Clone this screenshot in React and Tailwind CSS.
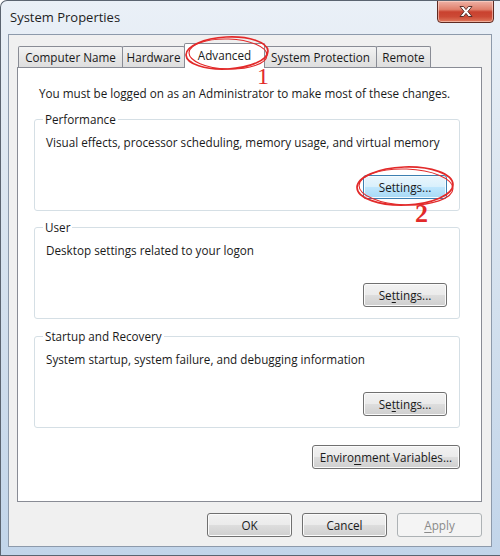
import React from "react";

function Btn({ children, variant = "normal", className = "" }) {
  const base =
    "h-[24px] flex items-center justify-center rounded-[3px] border text-[11.7px] leading-[16px] shrink-0";
  const styles = {
    normal:
      "border-[#707070] bg-[linear-gradient(#f2f2f2,#ebebeb_48%,#dddddd_52%,#cfcfcf)] shadow-[inset_0_0_0_1px_#fbfbfb] text-[#1a1a1a]",
    hover:
      "border-[#3c7fb1] bg-[linear-gradient(#eaf6fd,#d9f0fc_48%,#bee6fd_52%,#a7d9f5)] shadow-[inset_0_0_0_1px_#f4fbfe] text-[#1a1a1a]",
    disabled: "border-[#adb2b5] bg-[#f4f4f4] text-[#8a8a8a]",
  };
  return <div className={`${base} ${styles[variant]} ${className}`}>{children}</div>;
}

function Group({ label, text, btn, className = "" }) {
  return (
    <div
      className={`ml-[16px] w-[426px] h-[92px] flex flex-col border border-[#d5dfe5] rounded-[3px] ${className}`}
    >
      <span className="self-start ml-[8px] px-[2px] -mt-[9px] leading-[16px] bg-white text-[11.7px]">
        {label}
      </span>
      <span className="ml-[11px] mt-[7px] leading-[16px] text-[11.7px]">{text}</span>
      <div className="mt-auto self-end mr-[12px] mb-[11px]">{btn}</div>
    </div>
  );
}

function Tab({ children, w, selected = false, first = false }) {
  if (selected) {
    return (
      <div
        className={`${w} -ml-px h-[25px] -mb-px bg-white border border-b-0 border-[#898c95] rounded-t-[2px] flex items-center justify-center text-[11.7px] leading-[16px] pb-[3px]`}
      >
        {children}
      </div>
    );
  }
  return (
    <div
      className={`${w} ${first ? "" : "-ml-px"} h-[21px] border border-b-0 border-[#898c95] rounded-t-[2px] bg-[linear-gradient(#f3f3f3,#e6e6e6_55%,#dedede)] flex items-center justify-center text-[11.7px] leading-[16px]`}
    >
      {children}
    </div>
  );
}

export default function App() {
  return (
    <div className="relative w-[500px] h-[556px] overflow-hidden border-l border-t border-b border-[#5b6470] rounded-tl-[7px] bg-[linear-gradient(180deg,#eaf0f7_0%,#dde7f1_30%,#cddcec_70%,#c2d5ea_100%)] font-['Open_Sans','Noto_Sans',sans-serif] text-[#1a1a1a]">
      {/* Title bar */}
      <div className="flex h-[33px]">
        <span className="ml-[9px] mt-[7px] text-[13px] leading-[18px] text-[#1e1e1e]">
          System Properties
        </span>
        <div className="ml-auto mr-[6px] -mt-px w-[57px] h-[23px] rounded-b-[4px] border border-[#5e2a22] bg-[linear-gradient(#eeb2a6,#e0806c_40%,#c9412f_52%,#cc4a36_75%,#e07a5e)] shadow-[inset_0_0_0_1px_rgba(255,220,210,0.55)] flex items-center justify-center">
          <svg width="16" height="13" viewBox="0 0 16 13">
            <path
              d="M2 1.5 H5.6 L8 4.6 L10.4 1.5 H14 L9.9 6.5 L14 11.5 H10.4 L8 8.4 L5.6 11.5 H2 L6.1 6.5 Z"
              fill="#ffffff"
              stroke="#4a2420"
              strokeWidth="0.9"
              strokeLinejoin="round"
            />
          </svg>
        </div>
      </div>

      {/* Client area */}
      <div className="ml-[7px] w-[484px] h-[513px] border border-[#8d9aab] bg-[#f0f0f0] flex flex-col">
        {/* Tabs */}
        <div className="relative z-10 mt-[8px] ml-[9px] h-[24px] flex items-end">
          <Tab w="w-[105px]" first>
            Computer Name
          </Tab>
          <Tab w="w-[63px]">Hardware</Tab>
          <Tab w="w-[81px]" selected>
            Advanced
          </Tab>
          <Tab w="w-[113px]">System Protection</Tab>
          <Tab w="w-[55px]">Remote</Tab>
        </div>

        {/* Panel */}
        <div className="ml-[8px] w-[465px] h-[435px] border border-[#898c95] bg-white flex flex-col">
          <p className="mt-[17px] ml-[21px] leading-[16px] text-[11.7px]">
            You must be logged on as an Administrator to make most of these changes.
          </p>

          <Group
            className="mt-[18px]"
            label="Performance"
            text="Visual effects, processor scheduling, memory usage, and virtual memory"
            btn={
              <Btn variant="hover" className="w-[84px]">
                Settings...
              </Btn>
            }
          />
          <Group
            className="mt-[16px]"
            label="User"
            text="Desktop settings related to your logon"
            btn={
              <Btn className="w-[84px]">
                <span>
                  Se<span className="underline underline-offset-2">t</span>tings...
                </span>
              </Btn>
            }
          />
          <Group
            className="mt-[17px]"
            label="Startup and Recovery"
            text="System startup, system failure, and debugging information"
            btn={
              <Btn className="w-[84px]">
                <span>
                  Se<span className="underline underline-offset-2">t</span>tings...
                </span>
              </Btn>
            }
          />

          <div className="mt-[17px] self-end mr-[21px]">
            <Btn className="w-[148px]">
              <span>
                Enviro<span className="underline underline-offset-2">n</span>ment Variables...
              </span>
            </Btn>
          </div>
        </div>

        {/* Dialog buttons */}
        <div className="mt-[11px] mr-[9px] flex justify-end gap-[10px]">
          <Btn className="w-[85px]">OK</Btn>
          <Btn className="w-[85px]">Cancel</Btn>
          <Btn variant="disabled" className="w-[85px]">
            <span>
              <span className="underline underline-offset-2">A</span>pply
            </span>
          </Btn>
        </div>
      </div>

      {/* Annotations */}
      <svg
        className="absolute z-20 left-[-1px] top-[-1px] pointer-events-none"
        width="500"
        height="556"
        viewBox="0 0 500 556"
      >
        <ellipse cx="227" cy="53" rx="41" ry="16" fill="none" stroke="#e22a2a" strokeWidth="1.7" transform="rotate(-3 227 53)" />
        <ellipse cx="228" cy="54" rx="39" ry="15" fill="none" stroke="#e22a2a" strokeWidth="1.1" transform="rotate(2 228 54)" />
        <ellipse cx="405" cy="186" rx="48" ry="19" fill="none" stroke="#e22a2a" strokeWidth="1.7" transform="rotate(-2 405 186)" />
        <ellipse cx="406" cy="187" rx="47" ry="18" fill="none" stroke="#e22a2a" strokeWidth="1.1" transform="rotate(2 406 187)" />
      </svg>
      <span className="absolute z-20 left-[256px] top-[67px] font-['Liberation_Serif',serif] text-[24px] leading-[16px] text-[#e22a2a]">
        1
      </span>
      <span className="absolute z-20 left-[414px] top-[202px] font-['Liberation_Serif',serif] font-bold text-[26px] leading-[22px] text-[#e22a2a]">
        2
      </span>
    </div>
  );
}
